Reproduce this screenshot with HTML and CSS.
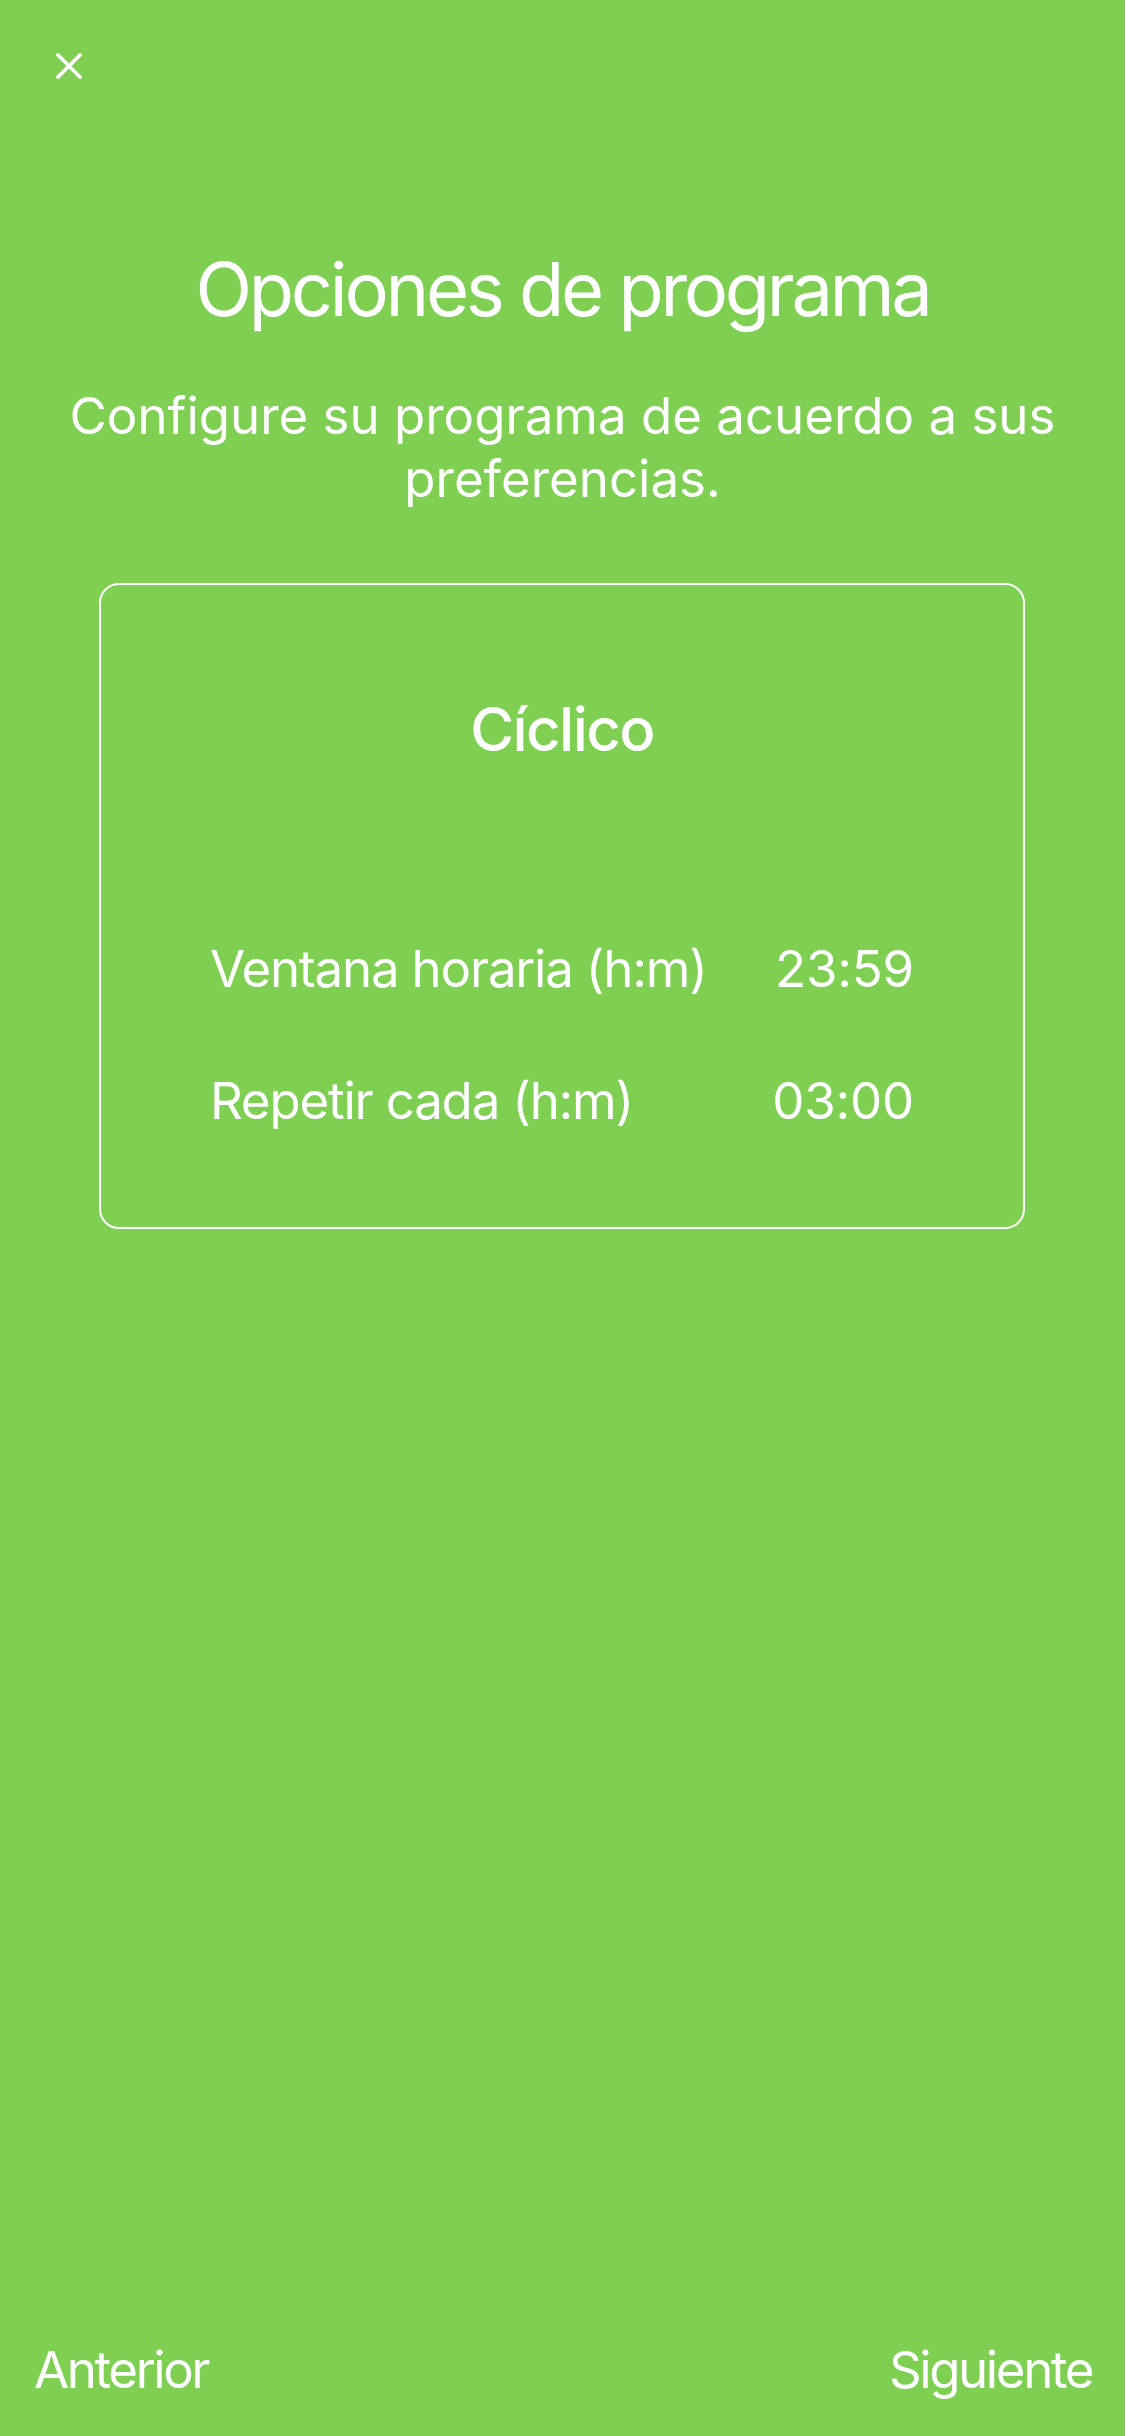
FILE: index.html
```html
<!DOCTYPE html>
<html lang="es">
<head>
<meta charset="utf-8">
<title>Opciones de programa</title>
<link rel="stylesheet" href="styles.css">
</head>
<body>
<div class="page">
  <div class="topbar">
    <svg class="close" width="26" height="26" viewBox="0 0 26 26" aria-label="Cerrar">
      <path d="M2 2 L24 24 M24 2 L2 24" stroke="#fff" stroke-width="3.8" stroke-linecap="round" fill="none"/>
    </svg>
  </div>
  <h1 class="title">Opciones de programa</h1>
  <p class="subtitle">Configure su programa de acuerdo a sus preferencias.</p>
  <div class="card">
    <div class="card-title">Cíclico</div>
    <div class="rows">
      <div class="row"><span class="label">Ventana horaria (h:m)</span><span class="value">23:59</span></div>
      <div class="row"><span class="label">Repetir cada (h:m)</span><span class="value">03:00</span></div>
    </div>
  </div>
  <div class="footer">
    <span class="nav-btn">Anterior</span>
    <span class="nav-btn">Siguiente</span>
  </div>
</div>
</body>
</html>
```
FILE: styles.css
```css
html, body {
  margin: 0;
  padding: 0;
}
body {
  background: #7ecf52;
  color: #ffffff;
  font-family: Inter, "Noto Sans", "Liberation Sans", sans-serif;
}
.page {
  width: 1125px;
  height: 2436px;
  display: flex;
  flex-direction: column;
  box-sizing: border-box;
}
.topbar {
  padding: 53px 0 0 56px;
  height: 26px;
}
.close {
  display: block;
}
.title {
  margin: 165px 0 0 0;
  font-size: 74px;
  line-height: 90px;
  font-weight: 400;
  text-align: center;
  letter-spacing: -3.3px;
}
.subtitle {
  margin: 50px 60px 0 60px;
  font-size: 51px;
  line-height: 63px;
  font-weight: 400;
  text-align: center;
  letter-spacing: 0;
}
.card {
  margin: 73px 100px 0 99px;
  border: 2px solid #ffffff;
  border-radius: 20px;
  padding: 108px 109px 95px 109px;
}
.card-title {
  font-size: 60px;
  line-height: 72px;
  font-weight: 500;
  text-align: center;
  letter-spacing: -1.6px;
}
.rows {
  margin-top: 172px;
  display: flex;
  flex-direction: column;
  gap: 69px;
}
.row {
  display: flex;
  justify-content: space-between;
  font-size: 51px;
  line-height: 63px;
}
.label {
  letter-spacing: -1.2px;
}
.value {
  letter-spacing: -0.2px;
}
.footer {
  margin-top: auto;
  padding: 0 33px 35px 34px;
  display: flex;
  justify-content: space-between;
}
.nav-btn {
  font-size: 51px;
  line-height: 63px;
  letter-spacing: -2.4px;
}
```
